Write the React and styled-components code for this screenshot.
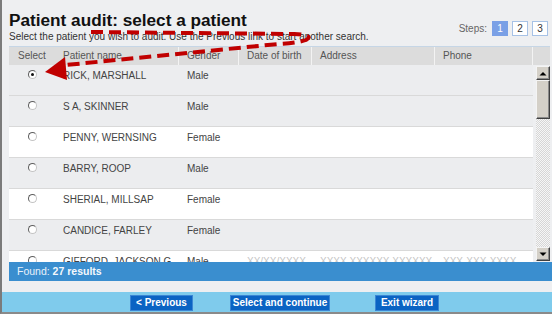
import React from 'react';
import styled, { createGlobalStyle } from 'styled-components';

const GlobalStyle = createGlobalStyle`
  html, body { margin: 0; padding: 0; background: #eeeff1; }
  body { font-family: "Liberation Sans", Arial, sans-serif; }
  * { box-sizing: border-box; }
`;

const Frame = styled.div`
  position: relative;
  width: 552px;
  height: 314px;
  border-left: 2px solid #7b7b7b;
  border-bottom: 2px solid #8a8a8a;
  background: #eeeff1;
  display: flex;
  flex-direction: column;
  padding-top: 10px;
  overflow: hidden;
`;

const Header = styled.header`
  display: flex;
  justify-content: space-between;
  align-items: flex-start;
  padding: 0 4px 0 7px;
`;

const Titles = styled.div`
  display: flex;
  flex-direction: column;
`;

const Title = styled.h1`
  margin: 0;
  font-size: 17.2px;
  line-height: 20px;
  font-weight: bold;
  color: #111;
`;

const Subtitle = styled.p`
  margin: 1px 0 0;
  font-size: 10px;
  line-height: 12px;
  color: #333;
`;

const Steps = styled.div`
  display: flex;
  align-items: center;
  gap: 4px;
  margin-top: 11px;
`;

const StepsLabel = styled.span`
  font-size: 10px;
  color: #666;
  margin-right: 1px;
`;

const StepBox = styled.span`
  width: 16px;
  height: 15px;
  display: flex;
  align-items: center;
  justify-content: center;
  font-size: 10px;
  border: 1px solid ${p => (p.$active ? '#7aa0e6' : '#a7c2e6')};
  background: ${p => (p.$active ? '#7aa0e6' : '#fff')};
  color: ${p => (p.$active ? '#fff' : '#333')};
`;

const Grid = styled.div`
  margin: 3px 2px 0 7px;
  border-top: 1px solid #c6d6e6;
  display: flex;
  flex-direction: column;
`;

const HeadRow = styled.div`
  display: flex;
  height: 18px;
  background: #dcdcdc;
`;

const HeadCell = styled.div`
  flex: ${p => (p.$w ? 'none' : '1')};
  width: ${p => (p.$w ? `${p.$w}px` : 'auto')};
  padding-left: ${p => (p.$center ? 0 : 8)}px;
  text-align: ${p => (p.$center ? 'center' : 'left')};
  font-size: 10px;
  line-height: 18px;
  color: #555;
  border-right: ${p => (p.$plain ? 'none' : '1px solid #f3f3f3')};
  white-space: nowrap;
`;

const Body = styled.div`
  display: flex;
  height: 197px;
  overflow: hidden;
`;

const Rows = styled.div`
  flex: none;
  width: 524px;
  overflow: hidden;
  background: #fff;
`;

const Row = styled.div`
  display: flex;
  height: 31px;
  flex: none;
  border-bottom: 1px solid #d9d9d9;
  background: ${p => (p.$shade ? '#ecedef' : '#fff')};
`;

const Cell = styled.div`
  flex: none;
  width: ${p => p.$w}px;
  padding: ${p => (p.$center ? '5px 0 0' : '4px 0 0 8px')};
  display: ${p => (p.$center ? 'flex' : 'block')};
  justify-content: center;
  align-items: flex-start;
  font-size: 10px;
  line-height: 14px;
  color: ${p => (p.$muted ? '#c4c4c4' : '#444')};
  white-space: nowrap;
  overflow: hidden;
`;

const Radio = styled.input.attrs({ type: 'radio' })`
  appearance: none;
  margin: 0;
  width: 9px;
  height: 9px;
  border-radius: 50%;
  border: 1px solid;
  border-color: #5d5d5d #c4c4c4 #c4c4c4 #5d5d5d;
  background: #fff;
  position: relative;
  &:checked::after {
    content: '';
    position: absolute;
    left: 2px;
    top: 2px;
    width: 3px;
    height: 3px;
    border-radius: 50%;
    background: #111;
  }
`;

const Scrollbar = styled.div`
  flex: none;
  margin: 1px 0 0 3px;
  width: 14px;
  height: 195px;
  display: flex;
  flex-direction: column;
  background-color: #f6f6f6;
  background-image: repeating-conic-gradient(#d6d6d6 0 25%, #f6f6f6 0 50%);
  background-size: 2px 2px;
`;

const ScrollPart = styled.div`
  flex: none;
  height: ${p => p.$h}px;
  margin-top: ${p => (p.$end ? 'auto' : '0')};
  background: #d4d0c8;
  border: 1px solid;
  border-color: #f4f4f4 #404040 #404040 #f4f4f4;
  box-shadow: inset -1px -1px 0 #8a8a8a;
  display: flex;
  align-items: center;
  justify-content: center;
`;

const Footer = styled.div`
  margin-left: 7px;
  height: 19px;
  background: #3a8ecf;
  color: #e8f1fa;
  font-size: 10.5px;
  line-height: 19px;
  padding-left: 8px;
  b { font-weight: bold; color: #f4f8fc; }
`;

const Spacer = styled.div`
  height: 11px;
  flex: none;
`;

const ButtonBar = styled.div`
  height: 20px;
  background: #7fcbec;
  display: flex;
  align-items: flex-start;
  padding: 3px 0 0 128px;
`;

const WizardButton = styled.button`
  width: ${p => p.$w}px;
  height: 16px;
  margin-left: ${p => p.$gap || 0}px;
  padding: 0;
  border: 1px solid #3b86d4;
  background: #0b63c3;
  color: #fff;
  font-family: "Liberation Sans", Arial, sans-serif;
  font-size: 10px;
  font-weight: bold;
  line-height: 14px;
  text-align: center;
  white-space: nowrap;
  cursor: pointer;
`;

const Overlay = styled.svg`
  position: absolute;
  left: 0;
  top: 0;
  pointer-events: none;
`;

const columns = [
  { key: 'select', label: 'Select', w: 46, center: true, plain: true },
  { key: 'name', label: 'Patient name', w: 124 },
  { key: 'gender', label: 'Gender', w: 60 },
  { key: 'dob', label: 'Date of birth', w: 73 },
  { key: 'address', label: 'Address', w: 123 },
  { key: 'phone', label: 'Phone', w: 98 },
];

const patients = [
  { name: 'RICK, MARSHALL', gender: 'Male', shade: true, checked: true },
  { name: 'S A, SKINNER', gender: 'Male', shade: true },
  { name: 'PENNY, WERNSING', gender: 'Female' },
  { name: 'BARRY, ROOP', gender: 'Male', shade: true },
  { name: 'SHERIAL, MILLSAP', gender: 'Female' },
  { name: 'CANDICE, FARLEY', gender: 'Female', shade: true },
  {
    name: 'GIFFORD, JACKSON G',
    gender: 'Male',
    dob: 'XX/XX/XXXX',
    address: 'XXXX XXXXXX XXXXXX',
    phone: 'XXX-XXX-XXXX',
  },
];

const Arrow = ({ dir }) => (
  <svg width="8" height="5" viewBox="0 0 8 5">
    {dir === 'up' ? <polygon points="0.5,4.5 4,1 7.5,4.5" fill="#000" /> : <polygon points="0.5,0.5 4,4 7.5,0.5" fill="#000" />}
  </svg>
);

export default function App() {
  return (
    <>
      <GlobalStyle />
      <Frame>
        <Header>
          <Titles>
            <Title>Patient audit: select a patient</Title>
            <Subtitle>Select the patient you wish to audit. Use the Previous link to start another search.</Subtitle>
          </Titles>
          <Steps>
            <StepsLabel>Steps:</StepsLabel>
            <StepBox $active>1</StepBox>
            <StepBox>2</StepBox>
            <StepBox>3</StepBox>
          </Steps>
        </Header>

        <Grid>
          <HeadRow>
            {columns.map(c => (
              <HeadCell key={c.key} $w={c.w} $center={c.center} $plain={c.plain}>{c.label}</HeadCell>
            ))}
            <HeadCell $plain />
          </HeadRow>
          <Body>
            <Rows>
              {patients.map((p, i) => (
                <Row key={i} $shade={p.shade}>
                  <Cell $w={46} $center>
                    <Radio name="patient" defaultChecked={!!p.checked} />
                  </Cell>
                  <Cell $w={124}>{p.name}</Cell>
                  <Cell $w={60}>{p.gender}</Cell>
                  <Cell $w={73} $muted>{p.dob}</Cell>
                  <Cell $w={123} $muted>{p.address}</Cell>
                  <Cell $w={98} $muted>{p.phone}</Cell>
                </Row>
              ))}
            </Rows>
            <Scrollbar>
              <ScrollPart $h={14}><Arrow dir="up" /></ScrollPart>
              <ScrollPart $h={39} />
              <ScrollPart $h={14} $end><Arrow dir="down" /></ScrollPart>
            </Scrollbar>
          </Body>
        </Grid>

        <Footer>Found: <b>27 results</b></Footer>
        <Spacer />
        <ButtonBar>
          <WizardButton $w={63}>&lt; Previous</WizardButton>
          <WizardButton $w={100} $gap={37}>Select and continue</WizardButton>
          <WizardButton $w={64} $gap={45}>Exit wizard</WizardButton>
        </ButtonBar>

        <Overlay width="552" height="314" viewBox="0 0 552 314">
          <path
            d="M 89 32 L 292 34 Q 313 35 304 40 Q 296 43 276 44 L 64 65"
            fill="none"
            stroke="#c00000"
            strokeWidth="4"
            strokeDasharray="12 6"
          />
          <polygon points="43,72 63,57 65,80" fill="#c00000" />
        </Overlay>
      </Frame>
    </>
  );
}
